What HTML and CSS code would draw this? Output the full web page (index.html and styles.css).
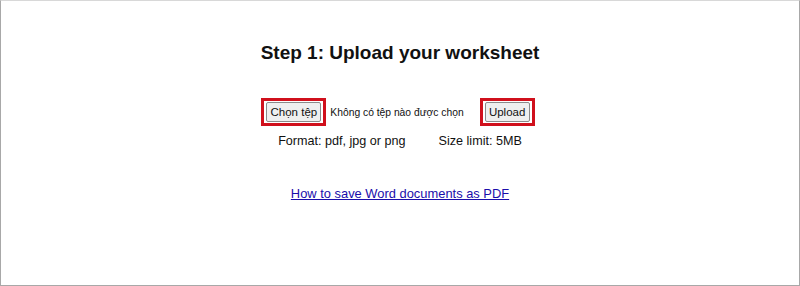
FILE: index.html
```html
<!DOCTYPE html>
<html lang="en">
<head>
    <meta charset="UTF-8">
    <meta name="viewport" content="width=device-width, initial-scale=1.0">
    <title>Upload worksheet</title>
    <link rel="stylesheet" href="styles.css">
</head>
<body>
    <div class="frame">
        <h1>Step 1: Upload your worksheet</h1>

        <div class="upload-row">
            <span class="mark"><button class="btn">Chọn tệp</button></span>
            <span class="file-name">Không có tệp nào được chọn</span>
            <span class="mark"><button class="btn">Upload</button></span>
        </div>

        <div class="info">
            <span>Format: pdf, jpg or png</span>
            <span>Size limit: 5MB</span>
        </div>

        <a class="help" href="#">How to save Word documents as PDF</a>
    </div>
</body>
</html>
```

FILE: styles.css
```css
html, body {
    margin: 0;
    padding: 0;
}
body {
    font-family: "Liberation Sans", Arial, sans-serif;
    color: #111;
    background: #fff;
}
.frame {
    box-sizing: border-box;
    width: 800px;
    height: 286px;
    border: 1px solid #a8a8a8;
    border-top-color: #d8d8d8;
    display: flex;
    flex-direction: column;
    align-items: center;
}
h1 {
    font-size: 19px;
    font-weight: bold;
    margin: 41px 0 0;
    line-height: 22px;
}
.upload-row {
    display: flex;
    align-items: center;
    margin-top: 34px;
    margin-left: -4px;
}
.mark {
    display: inline-flex;
    border: 3px solid #d0101c;
    padding: 1px 2px;
}
.btn {
    font-family: "Liberation Sans", Arial, sans-serif;
    font-size: 11.5px;
    color: #111;
    background: #efefef;
    border: 1px solid #8a8a8a;
    border-radius: 2px;
    padding: 0 2px;
    white-space: nowrap;
    height: 20px;
    line-height: 14px;
}
.mark:first-child .btn {
    width: 55px;
}
.mark:last-child .btn {
    width: 45px;
}
.file-name {
    font-size: 10.3px;
    margin: 0 16px 0 4px;
}
.info {
    display: flex;
    gap: 33px;
    font-size: 12.6px;
    margin-top: 8px;
}
.help {
    font-size: 12.9px;
    color: #1a0dab;
    margin-top: 38px;
}
```
